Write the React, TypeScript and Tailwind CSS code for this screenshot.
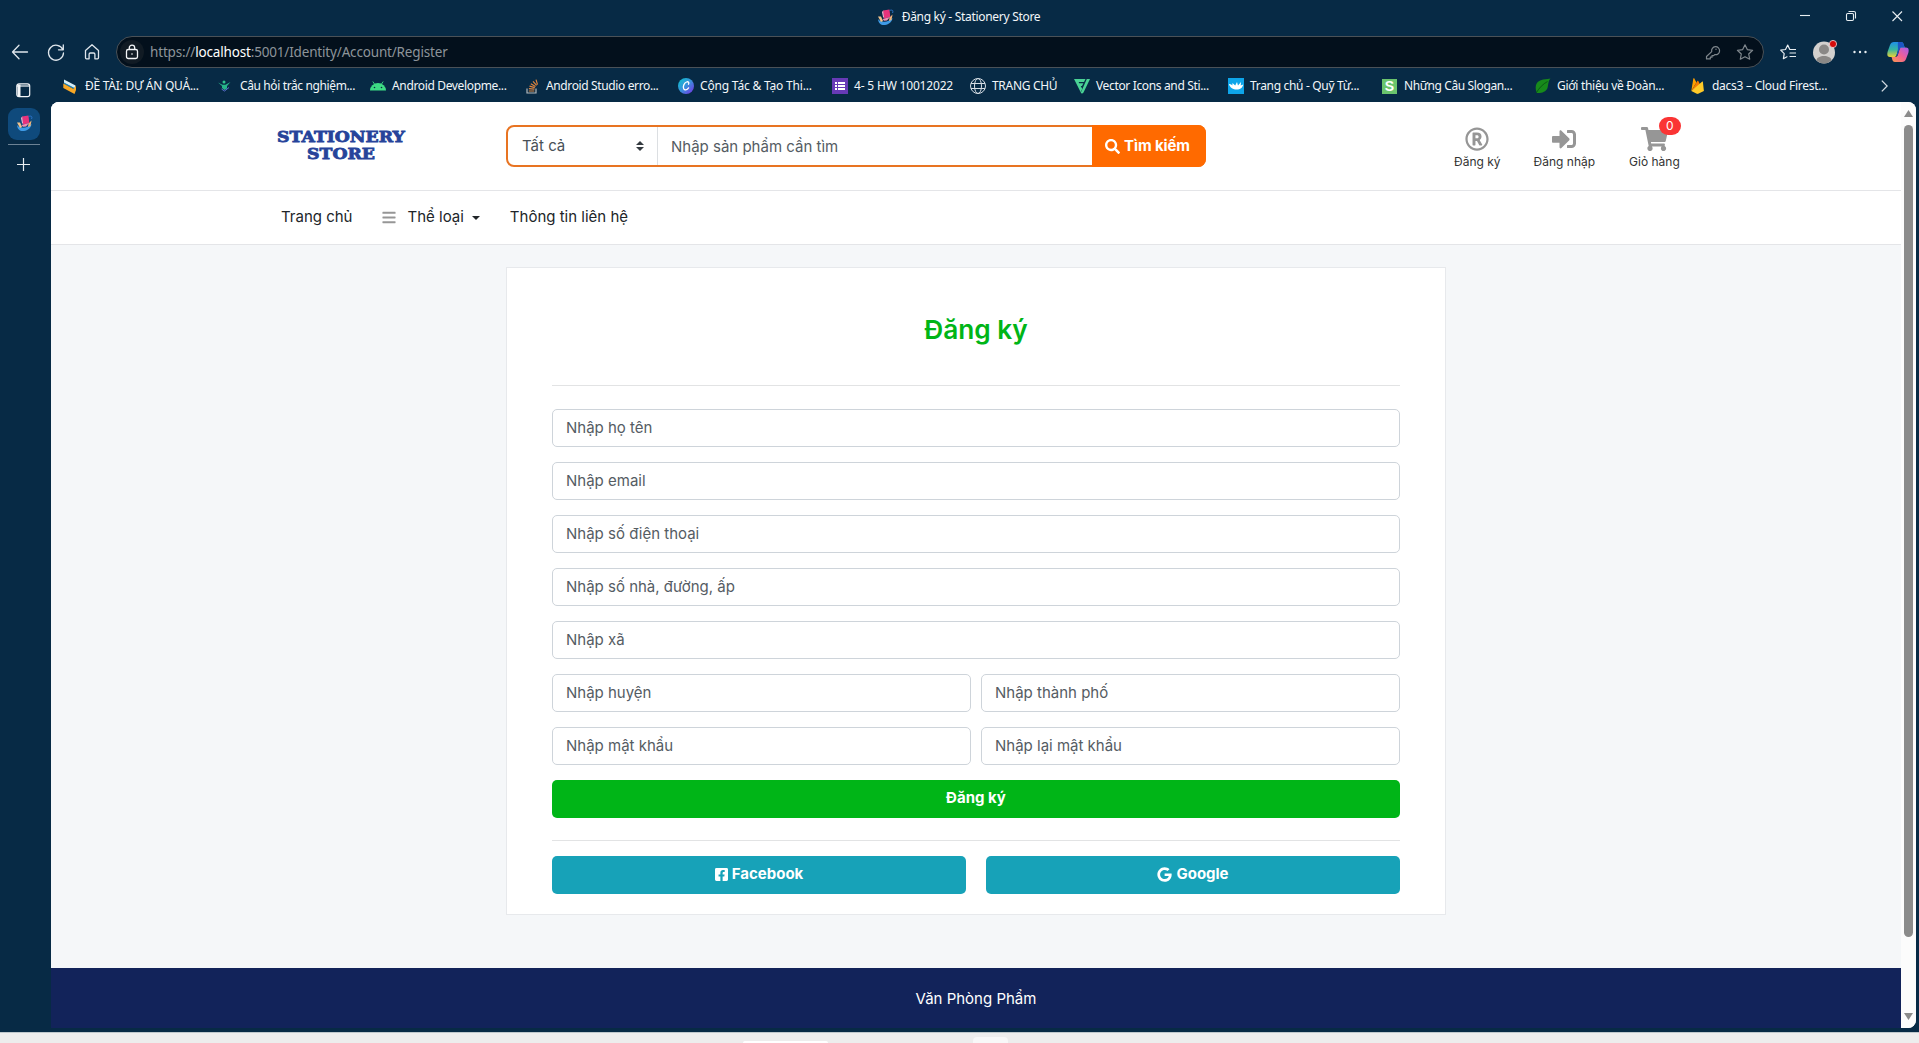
import type { ReactNode } from "react";
import {
  FaBars,
  FaFacebookSquare,
  FaGoogle,
  FaRegRegistered,
  FaSearch,
  FaShoppingCart,
  FaSignInAlt,
} from "react-icons/fa";

function StoreIcon() {
  return (
    <svg width="17" height="17" viewBox="0 0 17 17">
      <path d="M1 10c.5 4.500 3 6.500 7 6 4-.6 7-3 7.500-7-3 3-7 4.500-10 3.500C3.500 12.500 2 11.500 1 10z" fill="#3f9be6" />
      <path d="M1 7.500l3 5.500 2-1-2-4.500z" fill="#f2c38c" />
      <path d="M12.500 8.500l3-3-1 5.500-2.500 1z" fill="#efb479" />
      <path d="M6 1.500l6.500-1 .8 7.500-6.300 1.500z" fill="#e8337c" />
      <path d="M5 3l1.200-1.500L7.100 9 6 8z" fill="#f7b6d0" />
      <path d="M5.500 10l7.500-2-3 3.500-3 .3z" fill="#f08fb4" />
      <path d="M12.500 1.500c3-1 4 0 3 2.500" fill="none" stroke="#2c74c9" />
    </svg>
  );
}

const bookmarks: { label: string; width: string; icon: ReactNode; text: string }[] = [
  {
    label: "ĐỀ TÀI: DỰ ÁN QUẢ...",
    width: "w-[155px]",
    text: "tracking-[-0.26px]",
    icon: (
      <svg width="15" height="15" viewBox="0 0 15 15">
        <path d="M1 .5l11.500 6-1 3L1 4z" fill="#d6eef8" />
        <path d="M1 3.500L11.500 9v1.500L1 5z" fill="#1f84b8" />
        <path d="M.3 4.500L10.500 10l2.500-3.500V11L11.500 15 .3 9z" fill="#f9a825" />
      </svg>
    ),
  },
  {
    label: "Câu hỏi trắc nghiệm...",
    width: "w-[152px]",
    text: "tracking-[-0.38px]",
    icon: (
      <svg width="13" height="12" viewBox="0 0 13 12">
        <circle cx="6" cy="2" r="1.500" fill="#2fc48d" />
        <path d="M0 2.500l4.500 2.300h3L12.500 2 9 6v2.500L6.500 10 4 8V6z" fill="#27b389" />
        <path d="M3.500 9l3 2 4.500-3.500" stroke="#5a6ed0" fill="none" />
      </svg>
    ),
  },
  {
    label: "Android Developme...",
    width: "w-[156px]",
    text: "tracking-[-0.35px]",
    icon: (
      <svg width="16" height="10" viewBox="0 0 16 10">
        <path d="M0 9.500a8 7.500 0 0116 0z" fill="#3ddc84" />
        <path d="M2.800.5l2 3M13.200.5l-2 3" stroke="#3ddc84" strokeWidth=".9" />
        <circle cx="4.500" cy="6.500" r=".8" fill="#082a45" />
        <circle cx="11.500" cy="6.500" r=".8" fill="#082a45" />
      </svg>
    ),
  },
  {
    label: "Android Studio erro...",
    width: "w-[152px]",
    text: "-ml-0.5 tracking-[-0.37px]",
    icon: (
      <svg width="13" height="15" viewBox="0 0 13 15" fill="none">
        <path d="M1 9.500V14h9V9.500" stroke="#b5b9bc" strokeWidth="1.200" />
        <path d="M2.800 12h5.500M2.900 9.600l5.500.5M3.500 7.200l5.300 1.500M4.800 4.700l4.700 2.700M7 2.300l3.600 4M10 .6l1.500 5" stroke="#e0863f" strokeWidth="1.200" />
      </svg>
    ),
  },
  {
    label: "Cộng Tác & Tạo Thi...",
    width: "w-[154px]",
    text: "tracking-[-0.18px]",
    icon: (
      <svg width="16" height="16" viewBox="0 0 16 16">
        <defs>
          <linearGradient id="canva" x1="0" y1="0" x2="1" y2="1">
            <stop offset="0" stopColor="#07c4cc" />
            <stop offset=".5" stopColor="#3a8fdc" />
            <stop offset="1" stopColor="#7d2ae8" />
          </linearGradient>
        </defs>
        <circle cx="8" cy="8" r="8" fill="url(#canva)" />
        <path d="M10.500 6.300c1-1.800-.3-3-2-2.300-2.600 1-3.800 4.600-2.800 6.800.8 1.700 3.300 1.500 4.900-.9" fill="none" stroke="#fff" strokeWidth="1.300" strokeLinecap="round" />
      </svg>
    ),
  },
  {
    label: "4- 5 HW 10012022",
    width: "w-[138px]",
    text: "tracking-[-0.18px]",
    icon: (
      <svg width="16" height="16" viewBox="0 0 16 16">
        <path d="M0 0h16v16H0z" fill="#673ab7" />
        <path d="M3 4h2v2H3zm3 0h7v2H6zM3 7h2v2H3zm3 0h7v2H6zM3 10h2v2H3zm3 0h7v2H6z" fill="#fff" />
      </svg>
    ),
  },
  {
    label: "TRANG CHỦ",
    width: "w-[104px]",
    text: "tracking-[-0.3px]",
    icon: (
      <svg width="16" height="16" viewBox="0 0 16 16" fill="none" stroke="#d5dde4" strokeWidth="1">
        <circle cx="8" cy="8" r="7.500" />
        <ellipse cx="8" cy="8" rx="3.500" ry="7.500" />
        <path d="M1 5.500h14M1 10.500h14" />
      </svg>
    ),
  },
  {
    label: "Vector Icons and Sti...",
    width: "w-[154px]",
    text: "tracking-[-0.35px]",
    icon: (
      <svg width="16" height="15" viewBox="0 0 16 15" fill="#4ad295">
        <path d="M0 0h11.500L10 3H4.600l.6 1.200h4.200L8 7H6.700l1.500 2.800L6.700 13.200z" />
        <path d="M12.800 0H16L9.500 13.500c-.8 1.500-2.200 1.300-2.800.3l.8-1.800z" />
      </svg>
    ),
  },
  {
    label: "Trang chủ - Quỹ Từ...",
    width: "w-[154px]",
    text: "tracking-[-0.32px]",
    icon: (
      <svg width="16" height="16" viewBox="0 0 16 16">
        <path d="M0 0h16v16H0z" fill="#0ea5e9" />
        <path d="M1 6c1.500 0 2.500.5 3.300 1.500L4.500 5l2.700 2.500L9 4l1 3.500L13 4l-.3 3.500 2.500-1c-.5 3-3 5-6.500 5S2 10 1 6z" fill="#fff" />
      </svg>
    ),
  },
  {
    label: "Những Câu Slogan...",
    width: "w-[153px]",
    text: "tracking-[-0.38px]",
    icon: (
      <span className="flex h-[15px] w-[15px] items-center justify-center bg-[#6bc46d] font-['Liberation_Sans',sans-serif] text-[14px] leading-none font-bold text-white">
        S
      </span>
    ),
  },
  {
    label: "Giới thiệu về Đoàn...",
    width: "w-[156px]",
    text: "tracking-[-0.3px]",
    icon: (
      <svg width="16" height="16" viewBox="0 0 16 16">
        <path d="M15.500.5C13 1.500 3 0 1 7c-.8 3 0 6 1 8 4 .5 9-1 10.500-5C13.500 6.500 13 3 15.500.5z" fill="#178a1b" />
        <path d="M1.500 14.500C4 10 8 6 12.500 3.500" stroke="#0a5a12" fill="none" />
      </svg>
    ),
  },
  {
    label: "dacs3 – Cloud Firest...",
    width: "w-[140px]",
    text: "-ml-px tracking-[-0.26px]",
    icon: (
      <svg width="13" height="16" viewBox="0 0 13 16">
        <path d="M.3 13L2.300.8c.1-.5.7-.6 1-.2L5.400 4.500z" fill="#ffa000" />
        <path d="M.3 13L6.300 3c.3-.4.700-.4 1 0l2 4z" fill="#f57c00" />
        <path d="M.3 13L11 3.700c.3-.3.8-.1.9.3l1 9-5.700 2.800c-.4.2-1 .2-1.400 0z" fill="#ffca28" />
      </svg>
    ),
  },
];

function TitleBar() {
  return (
    <div className="relative flex h-[34px] items-center justify-center">
      <div className="flex items-center gap-2 pr-0.5">
        <StoreIcon />
        <span className="text-xs tracking-[-0.3px] text-[#f2f6f9]">Đăng ký - Stationery Store</span>
      </div>
      <svg className="absolute top-2 right-[14px]" width="105" height="16" viewBox="0 0 105 16" fill="none" stroke="#e8eef2" strokeWidth="1.100">
        <path d="M0 7.500h10" />
        <rect x="46.500" y="5.500" width="7" height="7" rx="1.200" />
        <path d="M48.500 3.500h5.500q1.500 0 1.500 1.500v5.500" />
        <path d="M92.500 3.500l9.500 9.500M102 3.500L92.500 13" />
      </svg>
    </div>
  );
}

function Toolbar() {
  return (
    <div className="flex h-9 items-center">
      <svg className="ml-[11px] shrink-0" width="90" height="20" viewBox="0 0 90 20" fill="none" stroke="#dfe6ec" strokeWidth="1.300" strokeLinecap="round" strokeLinejoin="round">
        <path d="M16.500 10H1.500M8 3.200L1.500 10 8 16.800" />
        <path d="M51.800 7.500A7.500 7.500 0 1052.500 11M52.300 3v4.800h-4.800" />
        <path d="M74.500 8.500L81 2.800l6.500 5.700v7.300q0 1-1 1h-2.600v-4.500q0-1.300-1.300-1.300h-3.200q-1.300 0-1.300 1.300v4.500h-2.600q-1 0-1-1z" />
      </svg>
      <div className="ml-[15px] flex h-8 w-[1648px] shrink-0 items-center rounded-full border border-[#4a5157] bg-[#03101c] pl-[3px]">
        <div className="flex h-6 w-6 items-center justify-center rounded-full bg-[#111b24]">
          <svg width="14" height="16" viewBox="0 0 14 16" fill="none" stroke="#f4f6f8" strokeWidth="1.300">
            <rect x="1.500" y="5.500" width="11" height="9" rx="1.800" />
            <path d="M4.300 5.500V3.800a2.700 2.700 0 015.400 0v1.700" />
            <circle cx="7" cy="10" r=".8" fill="#fff" stroke="none" />
          </svg>
        </div>
        <p className="ml-[6px] text-[13.5px] tracking-[-0.17px] text-[#8d949a]">
          <span>https://</span>
          <span className="text-white">localhost</span>
          <span>:5001/Identity/Account/Register</span>
        </p>
        <svg className="mr-[9px] ml-auto" width="49" height="18" viewBox="0 0 49 18" fill="none" stroke="#7f878d" strokeWidth="1.200" strokeLinejoin="round">
          <path d="M6.700 8.600a4 4 0 113 3l-1 1H7v1.600H5.300v1.700H1.500v-2.400z" />
          <circle cx="11" cy="6.200" r=".7" fill="#7f878d" stroke="none" />
          <path d="M40 1.800l2.300 4.800 5.300.7-3.900 3.700 1 5.200-4.700-2.500-4.700 2.500 1-5.200-3.900-3.700 5.300-.7z" />
        </svg>
      </div>
      <svg className="ml-4 shrink-0" width="16" height="16" viewBox="0 0 16 16" fill="none" stroke="#e8eef2" strokeWidth="1.200" strokeLinejoin="round" strokeLinecap="round">
        <path d="M9.800 5.500L7.700 1 5.500 5.500.7 6.200l3.500 3.500-.8 5L7 12.800M9.800 5.500H15.500M10 9h5.500M10 12.500h5.500" />
      </svg>
      <svg className="ml-[17px] shrink-0" width="24" height="24" viewBox="0 0 24 24">
        <circle cx="11" cy="12.500" r="11" fill="#d2d0ce" />
        <circle cx="11" cy="9.500" r="5" fill="#8a8886" />
        <path d="M3.500 20.500c0-6 15-6 15 0a11 11 0 01-15 0z" fill="#8a8886" />
        <circle cx="20" cy="4" r="3.600" fill="#d60b0b" stroke="#f3dada" strokeWidth=".8" />
      </svg>
      <svg className="ml-4 shrink-0" width="14" height="4" viewBox="0 0 14 4" fill="#e8eef2">
        <circle cx="1.500" cy="2" r="1.200" />
        <circle cx="7" cy="2" r="1.200" />
        <circle cx="12.500" cy="2" r="1.200" />
      </svg>
      <svg className="ml-5 shrink-0" width="22" height="22" viewBox="0 0 22 22">
        <defs>
          <linearGradient id="cpa" x1="0" y1="0" x2="0" y2="1">
            <stop offset="0" stopColor="#1f8fe8" />
            <stop offset=".5" stopColor="#35b6a0" />
            <stop offset="1" stopColor="#e9d335" />
          </linearGradient>
          <linearGradient id="cpb" x1="1" y1="0" x2="0" y2="1">
            <stop offset="0" stopColor="#a55cf0" />
            <stop offset=".5" stopColor="#ef5f95" />
            <stop offset="1" stopColor="#fb9a4c" />
          </linearGradient>
        </defs>
        <path d="M7 1h7c2 0 2.500 1.500 3 3.500L18 7h-4c-2 0-2.600 1-3 2.500L9.500 14c-.4 1.400-1.200 2-2.500 2H3c-3 0-3-3-2.300-5.500L3 4C3.700 2 5 1 7 1z" fill="url(#cpa)" />
        <path d="M15 21H8c-2 0-2.500-1.500-3-3.500L4.500 16H8c2 0 2.600-1 3-2.500L12.500 8.500C13 7 13.700 6.500 15 6.500h4c3 0 3 3 2.300 5.500L19 18c-.7 2-2 3-4 3z" fill="url(#cpb)" />
        <path d="M11 1h3c2 0 2.500 1.500 3 3.500l.7 2H15c-1.500 0-2 .3-2.600 2L11 13l-1.800 3 1.600-7c.4-2-.3-5 .2-8z" fill="#1c55c4" />
      </svg>
    </div>
  );
}

function BookmarksBar() {
  return (
    <div className="flex h-8 items-center pl-[63px]">
      {bookmarks.map((b) => (
        <div key={b.label} className={`flex shrink-0 items-center ${b.width}`}>
          <span className="flex w-[22px] shrink-0 items-center">{b.icon}</span>
          <span className={`text-xs whitespace-nowrap text-[#f2f6f9] ${b.text}`}>{b.label}</span>
        </div>
      ))}
      <svg className="mr-[31px] ml-auto" width="7" height="12" viewBox="0 0 7 12" fill="none" stroke="#d5dde4" strokeWidth="1.300">
        <path d="M.8.6L6.200 6 .8 11.400" />
      </svg>
    </div>
  );
}

function SideTabs() {
  return (
    <aside className="flex w-[51px] shrink-0 flex-col items-start">
      <div className="ml-2 flex h-8 w-8 items-center justify-center rounded-[9px] bg-[#0f4a7c] pb-0.5">
        <StoreIcon />
      </div>
      <div className="mt-1 ml-2 h-px w-8 bg-[#6c8294]" />
      <svg className="mt-[13px] ml-4" width="14" height="14" viewBox="0 0 14 14" stroke="#e8eef2" strokeWidth="1.200">
        <path d="M7.500 0v13M1 6.500h13" />
      </svg>
    </aside>
  );
}

function Header() {
  return (
    <header className="h-[89px] border-b border-[#e4e5e8] bg-white">
      <div className="mx-auto flex w-[1440px] pt-[23px]">
        <div className="ml-[10px] flex w-[150px] scale-x-[1.15] flex-col items-center pt-1 font-['DejaVu_Serif',serif] text-[15px] leading-[17px] font-bold text-[#26439a] [-webkit-text-stroke:0.8px_#26439a]">
          <span>STATIONERY</span>
          <span>STORE</span>
        </div>
        <div className="ml-[90px] flex h-[42px] w-[700px] rounded-lg border-2 border-[#e87422] bg-white text-[15px]">
          <div className="flex w-[150px] items-center justify-between border-r border-[#dcdfe2] pr-[13px] pl-[14px]">
            <span className="text-[#495057]">Tất cả</span>
            <svg width="8" height="10" viewBox="0 0 8 10" fill="#343a40">
              <path d="M0 4l4-4 4 4zM0 6h8l-4 4z" />
            </svg>
          </div>
          <div className="flex grow items-center pt-0.5 pl-[13px]">
            <span className="text-[#555c63]">Nhập sản phẩm cần tìm</span>
          </div>
          <div className="-m-0.5 flex w-[114px] items-center rounded-r-lg bg-[#ff6a00] pl-[13px] text-white">
            <FaSearch size={15} />
            <span className="ml-1 font-bold tracking-[-0.1px]">Tìm kiếm</span>
          </div>
        </div>
        <div className="ml-[248px] flex gap-[33px] text-xs text-[#333]">
          <div className="flex flex-col items-center pt-0.5">
            <FaRegRegistered size={24} color="#969696" />
            <span className="mt-[3px]">Đăng ký</span>
          </div>
          <div className="flex flex-col items-center pt-0.5">
            <FaSignInAlt size={24} color="#969696" />
            <span className="mt-[3px]">Đăng nhập</span>
          </div>
          <div className="relative ml-px flex flex-col items-center pt-0.5">
            <FaShoppingCart className="h-6 w-[27px]" color="#969696" />
            <span className="mt-[3px]">Giỏ hàng</span>
            <span className="absolute -top-2 right-[-1px] flex h-[18px] w-[22px] items-center justify-center rounded-full bg-[#fa3434] text-white">
              0
            </span>
          </div>
        </div>
      </div>
    </header>
  );
}

function NavBar() {
  return (
    <nav className="h-[54px] border-b border-[#e4e5e8] bg-white">
      <div className="mx-auto flex h-full w-[1440px] items-center pl-[25px] text-[15px] text-[#212529]">
        <span>Trang chủ</span>
        <FaBars className="ml-[29px] h-[15px] w-[14px]" color="#969696" />
        <span className="ml-3">Thể loại</span>
        <span className="ml-2 border-x-4 border-t-4 border-x-transparent border-t-[#212529]" />
        <span className="ml-[30px]">Thông tin liên hệ</span>
      </div>
    </nav>
  );
}

function Field({ label }: { label: string }) {
  return (
    <div className="flex h-[38px] grow basis-0 items-center rounded-[5px] border border-[#ced4da] bg-white pl-[13px]">
      <span className="text-[15px] text-[#555c63]">{label}</span>
    </div>
  );
}

const rows = [
  ["Nhập họ tên"],
  ["Nhập email"],
  ["Nhập số điện thoại"],
  ["Nhập số nhà, đường, ấp"],
  ["Nhập xã"],
  ["Nhập huyện", "Nhập thành phố"],
  ["Nhập mật khẩu", "Nhập lại mật khẩu"],
];

function RegisterCard() {
  return (
    <main className="mx-auto mt-[22px] h-[648px] w-[940px] border border-[#e7e9ec] bg-white px-[45px]">
      <h1 className="flex h-[117px] items-center justify-center pt-[6px] text-[26.25px] font-semibold text-[#00b517]">
        <span>Đăng ký</span>
      </h1>
      <div className="h-px bg-[#e2e3e4]" />
      <div className="mt-[23px] flex flex-col gap-[15px]">
        {rows.map((r) => (
          <div key={r[0]} className="flex gap-[10px]">
            {r.map((label) => (
              <Field key={label} label={label} />
            ))}
          </div>
        ))}
        <div className="flex h-[38px] items-center justify-center rounded-[5px] bg-[#00b517] pb-0.5 text-[15px] font-bold text-white">
          <span>Đăng ký</span>
        </div>
      </div>
      <div className="mt-[22px] h-px bg-[#e2e3e4]" />
      <div className="mt-[15px] flex gap-5 text-[15px] font-bold text-white">
        <div className="flex h-[38px] flex-1 items-center justify-center gap-1 rounded-[5px] bg-[#17a2b8] pb-px">
          <FaFacebookSquare className="h-[15px] w-[13px]" />
          <span>Facebook</span>
        </div>
        <div className="flex h-[38px] flex-1 items-center justify-center gap-1 rounded-[5px] bg-[#17a2b8] pb-px">
          <FaGoogle size={15} />
          <span>Google</span>
        </div>
      </div>
    </main>
  );
}

function ScrollBar() {
  return (
    <div className="flex w-[15px] flex-col items-center bg-[#fcfcfc]">
      <svg className="mt-2" width="9" height="7" viewBox="0 0 9 7" fill="#8b8b8b">
        <path d="M4.500 0L9 7H0z" />
      </svg>
      <div className="mt-2 h-[812px] w-[9px] rounded-full bg-[#8b8b8b]" />
      <svg className="mt-auto mb-2" width="9" height="7" viewBox="0 0 9 7" fill="#8b8b8b">
        <path d="M4.500 7L9 0H0z" />
      </svg>
    </div>
  );
}

export default function App() {
  return (
    <div className="flex h-[1043px] w-[1919px] flex-col overflow-hidden bg-[#072a45] font-['Noto_Sans',sans-serif]">
      <TitleBar />
      <Toolbar />
      <div className="relative">
        <BookmarksBar />
        <svg className="absolute top-[13px] left-4" width="15" height="15" viewBox="0 0 15 15" fill="none" stroke="#f4f6f8" strokeWidth="1.200">
          <rect x=".8" y=".8" width="12.900" height="12.900" rx="2.200" />
          <path d="M1 3h12.500" strokeWidth="1.200" />
          <path d="M3 1.500v12" strokeWidth="3" />
        </svg>
      </div>
      <div className="flex h-[926px] shrink-0">
        <div className="pt-[6px]">
          <SideTabs />
        </div>
        <div className="flex w-[1865px] overflow-hidden rounded-t-lg rounded-br-lg bg-white">
          <div className="flex w-[1850px] flex-col bg-[#f5f7f9] font-['Inter',sans-serif]">
            <Header />
            <NavBar />
            <RegisterCard />
            <footer className="mt-auto flex h-[60px] items-center justify-center bg-[#12235a] pt-[3px] text-[15px] text-white">
              <span>Văn Phòng Phẩm</span>
            </footer>
          </div>
          <ScrollBar />
        </div>
      </div>
      <div className="mt-1 flex h-[11px] shrink-0 items-end border-t border-[#bfc8cc] bg-[#ededed]">
        <div className="ml-[743px] h-0.5 w-[85px] rounded-t bg-white" />
        <div className="ml-[145px] h-1.5 w-[35px] rounded-t bg-[#f8f8f8]" />
      </div>
    </div>
  );
}
